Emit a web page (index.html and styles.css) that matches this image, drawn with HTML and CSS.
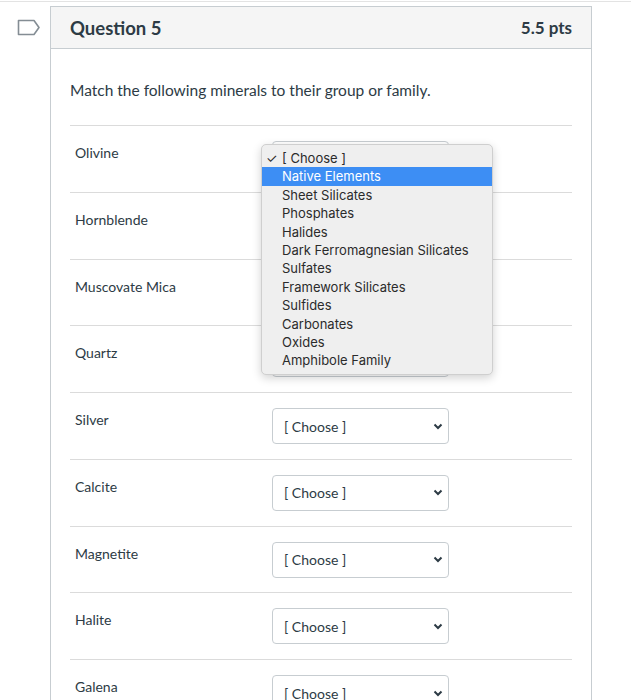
FILE: index.html
```html
<!DOCTYPE html>
<html lang="en">
<head>
    <meta charset="UTF-8">
    <title>Question 5</title>
    <link rel="stylesheet" href="styles.css">
</head>
<body>

<div class="topline"></div>

<div class="quiz">
    <!-- flag column -->
    <div class="flag-col">
        <svg class="flag" width="24" height="17" viewBox="0 0 24 17">
            <path d="M1.5 1.5 H17 L22 8.5 L17 15.5 H1.5 Z" fill="none" stroke="#848d94" stroke-width="1.6" stroke-linejoin="round"/>
        </svg>
    </div>

    <div class="question">
        <div class="question-header">
            <h2>Question 5</h2>
            <span class="pts">5.5 pts</span>
        </div>

        <div class="question-body">
            <p class="question-text">Match the following minerals to their group or family.</p>

            <div class="match-row">
                <div class="match-label">Olivine</div>
                <div class="select-wrap">
                    <div class="select-box">
                        <select><option>[ Choose ]</option></select>
                        <svg class="chevron" width="10" height="7" viewBox="0 0 10 7"><path d="M1.5 1.5 L5 5 L8.5 1.5" fill="none" stroke="#2d3b45" stroke-width="2"/></svg>
                    </div>
                    <!-- open dropdown list -->
                    <ul class="dropdown">
                        <li class="checked"><span class="check">✓</span>[ Choose ]</li>
                        <li class="active">Native Elements</li>
                        <li>Sheet Silicates</li>
                        <li>Phosphates</li>
                        <li>Halides</li>
                        <li>Dark Ferromagnesian Silicates</li>
                        <li>Sulfates</li>
                        <li>Framework Silicates</li>
                        <li>Sulfides</li>
                        <li>Carbonates</li>
                        <li>Oxides</li>
                        <li>Amphibole Family</li>
                    </ul>
                </div>
            </div>

            <div class="match-row">
                <div class="match-label">Hornblende</div>
                <div class="select-wrap">
                    <div class="select-box">
                        <select><option>[ Choose ]</option></select>
                        <svg class="chevron" width="10" height="7" viewBox="0 0 10 7"><path d="M1.5 1.5 L5 5 L8.5 1.5" fill="none" stroke="#2d3b45" stroke-width="2"/></svg>
                    </div>
                </div>
            </div>

            <div class="match-row">
                <div class="match-label">Muscovate Mica</div>
                <div class="select-wrap">
                    <div class="select-box">
                        <select><option>[ Choose ]</option></select>
                        <svg class="chevron" width="10" height="7" viewBox="0 0 10 7"><path d="M1.5 1.5 L5 5 L8.5 1.5" fill="none" stroke="#2d3b45" stroke-width="2"/></svg>
                    </div>
                </div>
            </div>

            <div class="match-row">
                <div class="match-label">Quartz</div>
                <div class="select-wrap">
                    <div class="select-box">
                        <select><option>[ Choose ]</option></select>
                        <svg class="chevron" width="10" height="7" viewBox="0 0 10 7"><path d="M1.5 1.5 L5 5 L8.5 1.5" fill="none" stroke="#2d3b45" stroke-width="2"/></svg>
                    </div>
                </div>
            </div>

            <div class="match-row">
                <div class="match-label">Silver</div>
                <div class="select-wrap">
                    <div class="select-box">
                        <select><option>[ Choose ]</option></select>
                        <svg class="chevron" width="10" height="7" viewBox="0 0 10 7"><path d="M1.5 1.5 L5 5 L8.5 1.5" fill="none" stroke="#2d3b45" stroke-width="2"/></svg>
                    </div>
                </div>
            </div>

            <div class="match-row">
                <div class="match-label">Calcite</div>
                <div class="select-wrap">
                    <div class="select-box">
                        <select><option>[ Choose ]</option></select>
                        <svg class="chevron" width="10" height="7" viewBox="0 0 10 7"><path d="M1.5 1.5 L5 5 L8.5 1.5" fill="none" stroke="#2d3b45" stroke-width="2"/></svg>
                    </div>
                </div>
            </div>

            <div class="match-row">
                <div class="match-label">Magnetite</div>
                <div class="select-wrap">
                    <div class="select-box">
                        <select><option>[ Choose ]</option></select>
                        <svg class="chevron" width="10" height="7" viewBox="0 0 10 7"><path d="M1.5 1.5 L5 5 L8.5 1.5" fill="none" stroke="#2d3b45" stroke-width="2"/></svg>
                    </div>
                </div>
            </div>

            <div class="match-row">
                <div class="match-label">Halite</div>
                <div class="select-wrap">
                    <div class="select-box">
                        <select><option>[ Choose ]</option></select>
                        <svg class="chevron" width="10" height="7" viewBox="0 0 10 7"><path d="M1.5 1.5 L5 5 L8.5 1.5" fill="none" stroke="#2d3b45" stroke-width="2"/></svg>
                    </div>
                </div>
            </div>

            <div class="match-row">
                <div class="match-label">Galena</div>
                <div class="select-wrap">
                    <div class="select-box">
                        <select><option>[ Choose ]</option></select>
                        <svg class="chevron" width="10" height="7" viewBox="0 0 10 7"><path d="M1.5 1.5 L5 5 L8.5 1.5" fill="none" stroke="#2d3b45" stroke-width="2"/></svg>
                    </div>
                </div>
            </div>
        </div>
    </div>
</div>

</body>
</html>
```

FILE: styles.css
```css
body {
    margin: 0;
    font-family: Lato, "Liberation Sans", sans-serif;
    color: #2d3b45;
    background-color: #fff;
    overflow: hidden;
}
.topline {
    margin-top: 1px;
    border-top: 1px solid #e3e3e3;
}
.quiz {
    display: flex;
    padding-top: 4px;
}
.flag-col {
    width: 50px;
    flex-shrink: 0;
}
.flag {
    display: block;
    margin: 13px 0 0 17px;
}
.question {
    width: 540px;
    border: 1px solid #c7cdd1;
    border-bottom: none;
}
.question-header {
    display: flex;
    justify-content: space-between;
    align-items: center;
    height: 41px;
    padding: 0 19px 0 19px;
    background-color: #f5f5f5;
    border-bottom: 1px solid #c7cdd1;
}
.question-header h2 {
    margin: 0;
    font-size: 18.5px;
    font-weight: 700;
}
.pts {
    font-size: 17px;
    font-weight: 700;
}
.question-body {
    padding: 0 19px;
}
.question-text {
    margin: 0;
    padding: 32px 0 26px;
    font-size: 15.5px;
}
.match-row {
    display: flex;
    height: 66.75px;
    box-sizing: border-box;
    border-top: 1px solid #dbdbdb;
    padding: 15px 0 0 5px;
}
.match-label {
    width: 197px;
    padding-top: 3px;
    font-size: 14px;
}
.select-wrap {
    position: relative;
}
.select-box {
    display: flex;
    align-items: center;
    width: 177px;
    height: 36px;
    box-sizing: border-box;
    border: 1px solid #c7cdd1;
    border-radius: 4px;
    background-color: #fff;
    padding: 0 5px 0 11px;
}
.select-box select {
    flex: 1;
    appearance: none;
    border: none;
    background: none;
    padding: 0;
    font-family: Lato, "Liberation Sans", sans-serif;
    font-size: 14px;
    color: #2d3b45;
}
.dropdown {
    position: absolute;
    top: 3px;
    left: -11px;
    width: 230px;
    margin: 0;
    padding: 4px 0;
    list-style: none;
    background-color: #efefef;
    border: 1px solid #cfcfcf;
    border-radius: 5px;
    box-shadow: 0 3px 10px rgba(0, 0, 0, 0.18);
    font-family: Inter, "Liberation Sans", sans-serif;
    font-size: 13px;
    color: #2b2b2b;
    z-index: 2;
}
.dropdown li {
    position: relative;
    height: 18.4px;
    line-height: 18.4px;
    padding-left: 20px;
}
.dropdown li.active {
    background-color: #3d8ef4;
    color: #fff;
}
.check {
    position: absolute;
    left: 4px;
    font-size: 13px;
}
```
